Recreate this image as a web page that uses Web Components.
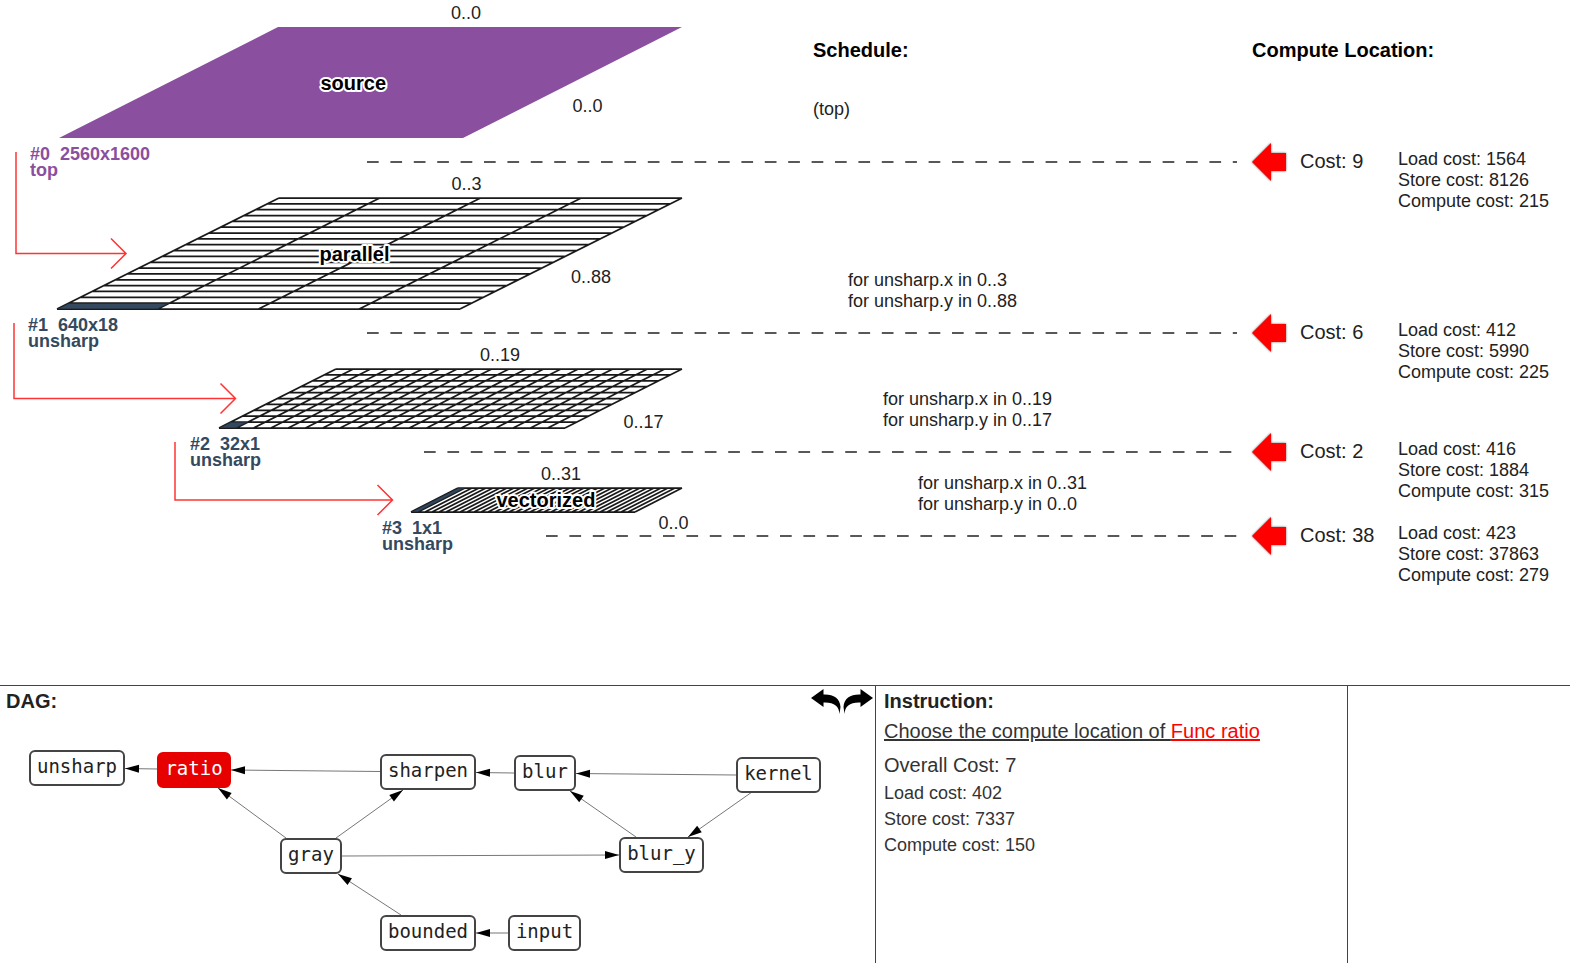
<!DOCTYPE html>
<html lang="en">
<head>
<meta charset="utf-8">
<title>Schedule explorer</title>
<style>
  html, body { margin: 0; }
  body {
    background: #fff;
    color: #222;
    font-family: "Liberation Sans", Arial, sans-serif;
    font-size: 18px;
    line-height: 21px;
  }
</style>
</head>
<body>
<schedule-app></schedule-app>

<script>
function render(host, markup) {
  const template = document.createElement("template");
  template.innerHTML = markup;
  host.attachShadow({ mode: "open" }).append(template.content.cloneNode(true));
}

/* Cost marker: red pointer, total cost and its breakdown. */
customElements.define("compute-location", class extends HTMLElement {
  connectedCallback() {
    const [load, store, compute] = this.getAttribute("parts").split(" ");
    render(this, `
      <style>
        :host { display: grid; grid-template-columns: 48px 98px auto; align-items: start; white-space: nowrap; }
        svg { display: block; filter: drop-shadow(0 0 1px #0009); }
        .total { font-size: 20px; line-height: 36px; }
        .parts { padding-top: 6px; }
        p { margin: 0; }
      </style>
      <svg width="34" height="38" viewBox="0 0 34 38" aria-hidden="true">
        <path d="M0 19 19 0V10H34V28H19V38Z" fill="#f00"/>
      </svg>
      <span class="total">Cost: ${this.getAttribute("cost")}</span>
      <div class="parts">
        <p>Load cost: ${load}</p>
        <p>Store cost: ${store}</p>
        <p>Compute cost: ${compute}</p>
      </div>`);
  }
});

/* One level of the loop nest: drawing, schedule text and compute location. */
customElements.define("loop-stage", class extends HTMLElement {
  connectedCallback() {
    const a = name => this.getAttribute(name);
    const n = name => Number(a(name));
    const top = 27, right = 682;
    const h = n("depth"), w = n("span"), left = n("left");
    const bottom = top + h, tl = right - w, br = left + w;
    const cols = n("cols"), rows = n("rows");
    const mid = top + h / 2, dashY = bottom + 24;
    const slant = tl - left;
    const fill = a("fill");

    let shape = "";
    if (a("solid") !== null) {
      shape = `<path d="M${tl} ${top}H${right}L${br} ${bottom}H${left}Z" fill="${fill}"/>`;
    } else {
      const cellH = h / rows, cellW = w / cols, cut = slant / rows;
      shape = `<path d="M${left} ${bottom}h${cellW}l${cut} ${-cellH}h${-cellW}Z" fill="#34495e"/>`;
      let d = "";
      for (let i = 0; i <= rows; i++) d += `M${tl - cut * i} ${top + cellH * i}h${w}`;
      for (let i = 0; i <= cols; i++) d += `M${tl + cellW * i} ${top}L${left + cellW * i} ${bottom}`;
      shape += `<path d="${d}" fill="none" stroke="#000" stroke-opacity=".9" stroke-width="1.75"/>`;
      shape += `<path d="M${left} ${bottom}h${cellW}l${cut} ${-cellH}h${-cellW}Z" fill="#34495e" fill-opacity=".7"/>`;
    }

    let arrow = "";
    if (a("from") !== null) {
      const x = n("from") - 43, tip = (tl + left) / 2 - 42;
      arrow = `<path d="M${x} -19V${mid}H${tip}M${tip - 15} ${mid - 15}l15 15l-15 15" fill="none" stroke="#f00" stroke-opacity=".8" stroke-width="1.5"/>`;
    }

    render(this, `
      <style>
        :host {
          display: grid;
          grid-template-columns: 813px 1fr 318px;
          grid-template-rows: ${h + 60}px;
        }
        svg { grid-area: 1 / 1 / 2 / 3; width: calc(100% - 15px); height: 100%; overflow: visible; }
        .halo { font-size: 20px; font-weight: bold; fill: #000; stroke: #fff; stroke-width: 4px; paint-order: stroke; stroke-linejoin: round; }
        text { fill: #222; }
        .id { font-weight: bold; fill: ${fill}; white-space: pre; }
        .column { display: flex; flex-direction: column; min-height: 0; }
        .schedule { grid-area: 1 / 2; padding-bottom: 30px; padding-left: ${n("level") * 35}px; }
        .location { grid-area: 1 / 3; }
        .text { min-height: 42px; }
        compute-location { margin-bottom: -41px; }
        ::slotted(h2) { margin: 0; padding-top: 36px; font-size: 20px; line-height: 28px; color: #000; }
        .end { margin-top: auto; }
      </style>
      <svg aria-hidden="true">
        ${shape}
        ${arrow}
        <svg x="${a("dash")}" style="width:calc(100% - ${a("dash")}px);overflow:hidden">
          <line x1="0" y1="${dashY}" x2="100%" y2="${dashY}" stroke="#222" stroke-width="1.5" stroke-dasharray="11.7"/>
        </svg>
        <text x="${(tl + right) / 2 - 29}" y="${top - 8}">${a("x-range")}</text>
        <text x="${(br + right) / 2}" y="${mid + 29}">${a("y-range")}</text>
        <text class="halo" x="${(left + right) / 2 - 50}" y="${mid + 7}">${a("kind") || ""}</text>
        <text class="id" x="${left - 29}" y="${bottom + 22}">${a("label")}</text>
        <text class="id" x="${left - 29}" y="${bottom + 38}">${a("func")}</text>
      </svg>
      <div class="column schedule">
        <slot name="schedule-title"></slot>
        <div class="text end"><slot></slot></div>
      </div>
      <div class="column location">
        <slot name="location-title"></slot>
        <compute-location class="end" cost="${a("cost")}" parts="${a("parts")}"></compute-location>
      </div>`);
  }
});

/* Graph of funcs, nodes placed freely on a canvas. */
customElements.define("func-graph", class extends HTMLElement {
  connectedCallback() {
    const nodes = [
      ["unsharp", 29, 64, 96], ["ratio", 157, 66, 74, true], ["sharpen", 380, 68, 96],
      ["blur", 514, 69, 62], ["kernel", 736, 71, 85], ["gray", 280, 152, 62],
      ["blur_y", 619, 151, 85], ["bounded", 380, 229, 96], ["input", 508, 229, 73]
    ];
    const edges = [
      [158, 83, 125, 82.5], [380, 85.5, 231, 84], [286, 152, 218, 102], [336, 152, 403, 104],
      [342, 170, 619, 169], [514, 87, 476, 86.5], [736, 89, 576, 87.5], [636, 151, 570, 105],
      [752, 106, 688, 151], [401, 229, 338, 188], [508, 247, 476, 247]
    ];
    const lines = edges.map(([x1, y1, x2, y2]) => {
      const angle = Math.atan2(y2 - y1, x2 - x1) * 180 / Math.PI;
      return `<line x1="${x1}" y1="${y1}" x2="${x2}" y2="${y2}" stroke="#777"/>
        <path d="M0 0-14-4V4Z" transform="translate(${x2} ${y2}) rotate(${angle})"/>`;
    }).join("");
    const boxes = nodes.map(([name, x, y, w, on]) =>
      `<button type="button" class="${on ? "on" : ""}" style="left:${x}px;top:${y}px;width:${w}px">${name}</button>`).join("");
    render(this, `
      <style>
        :host { display: block; position: absolute; inset: 0; }
        svg { width: 100%; height: 100%; display: block; overflow: visible; }
        button {
          position: absolute; box-sizing: border-box; height: 36px; padding: 0 0 4px;
          border: 2px solid #444; border-radius: 6px; background: #fff; color: #222;
          font: 19px/28px "DejaVu Sans Mono", monospace;
        }
        .on { background: #e60000; border-color: #e60000; color: #fff; }
      </style>
      <svg aria-hidden="true">${lines}</svg>${boxes}`);
  }
});

/* Undo and redo buttons. */
customElements.define("history-buttons", class extends HTMLElement {
  connectedCallback() {
    const icon = "M0 9 12.500 0V5.500C22 5 29 9 29.500 18L28.500 25C28 17 23 13 12.500 13.500V18Z";
    render(this, `
      <style>
        :host { display: flex; gap: 4px; }
        button { border: 0; padding: 0; background: none; width: 29px; height: 26px; }
        svg { display: block; overflow: visible; }
      </style>
      <button type="button" aria-label="Undo"><svg width="29" height="26"><path d="${icon}"/></svg></button>
      <button type="button" aria-label="Redo"><svg width="29" height="26"><path d="${icon}" transform="translate(29) scale(-1 1)"/></svg></button>`);
  }
});

customElements.define("info-panel", class extends HTMLElement {
  connectedCallback() {
    render(this, `
      <style>
        :host { display: block; position: relative; box-sizing: border-box; min-width: 0; }
        :host(:not(:last-of-type)) { border-right: 1px solid #444; }
        header { display: flex; justify-content: space-between; }
        ::slotted(h2) { margin: 0; font-size: 20px; line-height: 30px; }
        ::slotted(history-buttons) { position: relative; z-index: 1; margin: 3px 2px 0 0; }
      </style>
      <header><slot name="title"></slot><slot name="tools"></slot></header>
      <slot></slot>`);
  }
});

customElements.define("schedule-app", class extends HTMLElement {
  connectedCallback() {
    render(this, `
      <style>
        :host { display: flex; flex-direction: column; min-height: 100vh; }
        main { flex: 1; }
        .panels {
          display: grid; grid-template-columns: 876fr 472fr 222fr;
          min-height: 278px; box-sizing: border-box; border-top: 1px solid #444;
        }
        .dag { padding-left: 6px; }
        .instruction { padding-left: 8px; }
        .instruction p { margin: 0; line-height: 26px; color: #333; }
        .instruction .big { font-size: 20px; line-height: 30px; }
        .instruction .choice { text-decoration: underline; text-decoration-thickness: 2px; margin-bottom: 4px; }
        .choice span { color: #f00; text-decoration: underline; text-decoration-thickness: 2px; }
      </style>
      <main>
        <loop-stage level="0" solid fill="#8a4f9f" left="59" span="404" depth="111" dash="367"
          x-range="0..0" y-range="0..0" kind="source" label="#0  2560x1600" func="top"
          cost="9" parts="1564 8126 215">
          <h2 slot="schedule-title">Schedule:</h2>
          <h2 slot="location-title">Compute Location:</h2>(top)</loop-stage>
        <loop-stage level="1" from="59" fill="#34495e" left="57" span="403" depth="111" rows="19" cols="4" dash="367"
          x-range="0..3" y-range="0..88" kind="parallel" label="#1  640x18" func="unsharp"
          cost="6" parts="412 5990 225">for unsharp.x in 0..3<br>for unsharp.y in 0..88</loop-stage>
        <loop-stage level="2" from="57" fill="#34495e" left="219" span="346" depth="59" rows="10" cols="20" dash="424"
          x-range="0..19" y-range="0..17" label="#2  32x1" func="unsharp"
          cost="2" parts="416 1884 315">for unsharp.x in 0..19<br>for unsharp.y in 0..17</loop-stage>
        <loop-stage level="3" from="218" fill="#34495e" left="411" span="224" depth="24" rows="1" cols="32" dash="546"
          x-range="0..31" y-range="0..0" kind="vectorized" label="#3  1x1" func="unsharp"
          cost="38" parts="423 37863 279">for unsharp.x in 0..31<br>for unsharp.y in 0..0</loop-stage>
      </main>
      <div class="panels">
        <info-panel class="dag">
          <h2 slot="title">DAG:</h2>
          <history-buttons slot="tools"></history-buttons>
          <func-graph></func-graph>
        </info-panel>
        <info-panel class="instruction">
          <h2 slot="title">Instruction:</h2>
          <p class="big choice">Choose the compute location of <span>Func ratio</span></p>
          <p class="big">Overall Cost: 7</p>
          <p>Load cost: 402</p>
          <p>Store cost: 7337</p>
          <p>Compute cost: 150</p>
        </info-panel>
        <info-panel></info-panel>
      </div>`);
  }
});
</script>
</body>
</html>
